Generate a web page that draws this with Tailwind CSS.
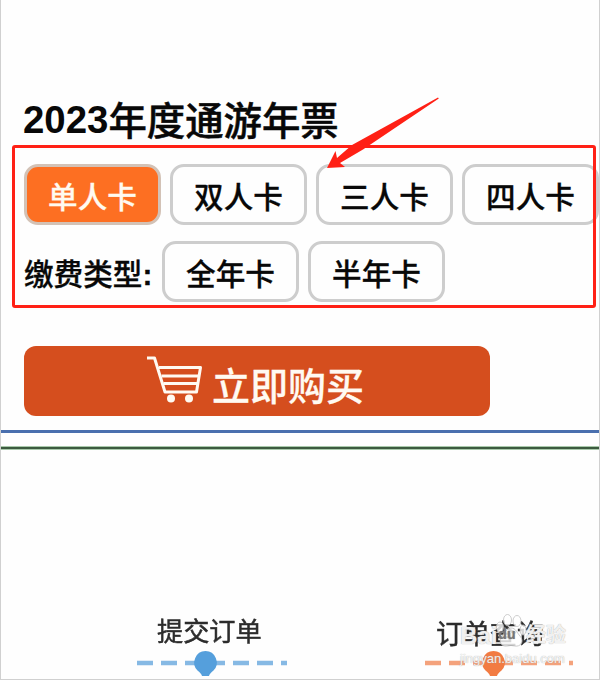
<!DOCTYPE html>
<html lang="zh-CN">
  <head>
    <meta charset="UTF-8" />
    <meta name="viewport" content="width=device-width, initial-scale=1.0" />
    <title>2023年度通游年票</title>
    <script src="https://cdn.jsdelivr.net/npm/@tailwindcss/browser@4"></script>
  </head>
  <body
    class="relative w-[600px] h-[680px] overflow-hidden bg-[#fefefe] border border-t-0 border-[#d0d0d0] font-['Liberation_Sans','Noto_Sans_CJK_SC',sans-serif] text-[#080808]"
  >
    <!-- edge of the neighbouring photo -->
    <div
      class="absolute -left-px top-[100px] w-px h-[300px] bg-linear-to-b from-[#d0d0d0] via-[#777] to-[#d0d0d0]"
    ></div>

    <main class="flex flex-col pt-[96px]">
      <h1
        class="flex items-center h-12 pl-[22px] text-[38.4px] leading-none whitespace-nowrap"
      >
        <span class="font-bold">2023</span>
        <span
          class="pb-[4px] font-medium font-['Noto_Sans_CJK_SC',sans-serif] [-webkit-text-stroke:0.5px]"
          >年度通游年票</span
        >
      </h1>

      <div
        class="flex gap-[9px] mt-5 pl-[23px] text-[29.6px] font-medium leading-none [-webkit-text-stroke:0.3px]"
      >
        <button
          class="shrink-0 w-[137px] h-[61px] pt-[6px] rounded-[14px] border-[3px] border-[#d3c2b6] bg-[#fd6f22] text-[#fffaf0]"
        >
          单人卡
        </button>
        <button
          class="shrink-0 w-[137px] h-[61px] pt-[6px] rounded-[14px] border-[3px] border-[#cdcdcd]"
        >
          双人卡
        </button>
        <button
          class="shrink-0 w-[137px] h-[61px] pt-[6px] rounded-[14px] border-[3px] border-[#cdcdcd]"
        >
          三人卡
        </button>
        <button
          class="shrink-0 w-[137px] h-[61px] pt-[6px] rounded-[14px] border-[3px] border-[#cdcdcd]"
        >
          四人卡
        </button>
      </div>

      <div
        class="flex items-center gap-[9px] mt-4 pl-[23px] text-[29.6px] font-medium leading-none [-webkit-text-stroke:0.3px]"
      >
        <span class="w-[129px] pt-[6px] whitespace-nowrap"
          >缴费类型<b>:</b></span
        >
        <button
          class="w-[137px] h-[61px] pt-[6px] rounded-[14px] border-[3px] border-[#cdcdcd]"
        >
          全年卡
        </button>
        <button
          class="w-[137px] h-[61px] pt-[6px] rounded-[14px] border-[3px] border-[#cdcdcd]"
        >
          半年卡
        </button>
      </div>

      <button
        class="flex items-start w-[466px] h-[70px] mt-11 ml-[23px] pl-[123px] rounded-[12px] bg-[#d54e1e] text-[#fffaf2]"
      >
        <svg
          class="w-[58px] h-[50px] mt-[9px]"
          viewBox="0 0 58 50"
          fill="none"
          stroke="currentColor"
          stroke-width="3"
          stroke-linejoin="round"
        >
          <path d="M0 3h7.500l10.500 34h31.500l4-24.500H12" />
          <path d="M14.500 21h37M16.500 28.500h34" />
          <circle cx="24" cy="43.500" r="4" fill="currentColor" stroke="none" />
          <circle cx="42" cy="43.500" r="4" fill="currentColor" stroke="none" />
        </svg>
        <span
          class="mt-[22px] ml-[7px] text-[38px] font-medium leading-none [-webkit-text-stroke:0.3px]"
          >立即购买</span
        >
      </button>

      <div class="-ml-px h-[3px] mt-[14px] bg-[#4a6fae]"></div>
      <div
        class="-ml-px h-1 mt-[13px] border-y border-[#a9c9ab] bg-[#3b5a3e]"
      ></div>

      <div class="flex mt-[168px] leading-none text-[#2c2c2c]">
        <section class="w-[150px] ml-[135px]">
          <h2
            class="pl-[21px] pt-px text-[26.200px] blur-[0.6px] [-webkit-text-stroke:0.5px]"
          >
            提交订单
          </h2>
          <svg
            class="block w-[152px] h-[27px] mt-[5px] blur-[0.7px]"
            viewBox="0 0 152 27"
          >
            <path
              d="M1 13h150"
              stroke="#86b9e4"
              stroke-width="4.500"
              stroke-dasharray="16 8"
            />
            <path
              d="M69.500 1a11.500 11.500 0 0 1 8 19.500q-4 3-4.500 5.500h-7q-.5-2.500-4.500-5.500a11.500 11.500 0 0 1 8-19.500z"
              fill="#559fdc"
            />
          </svg>
        </section>
        <section class="w-[150px] ml-[138px]">
          <h2
            class="pl-[12px] pt-[4px] text-[27px] blur-[0.6px] [-webkit-text-stroke:0.5px]"
          >
            订单查询
          </h2>
          <svg
            class="block w-[152px] h-[27px] mt-px blur-[0.7px]"
            viewBox="0 0 152 27"
          >
            <path
              d="M1 13h148"
              stroke="#f4a27c"
              stroke-width="4.500"
              stroke-dasharray="16 8"
            />
            <path
              d="M69.500 1a11.500 11.500 0 0 1 8 19.500q-4 3-4.500 5.500h-7q-.5-2.500-4.500-5.500a11.500 11.500 0 0 1 8-19.500z"
              fill="#f27b42"
            />
          </svg>
        </section>
      </div>
    </main>

    <!-- red marker frame and arrow -->
    <div
      class="absolute left-[11px] top-[145px] w-[584px] h-[163px] rounded-[3px] border-[3px] border-[#ff2015]"
    ></div>
    <svg
      class="absolute left-[323px] top-[94px] w-[120px] h-[80px]"
      viewBox="324 94 120 80"
      fill="#ff2015"
    >
      <path
        d="M327 168l8.500-17 1.500 7L352 145l86-47.500.8 1L363 149.500l-23 13.500 5 4z"
      />
    </svg>

    <!-- watermark -->
    <div
      class="absolute left-[459px] top-[614px] w-[106px] text-white/85 leading-none"
    >
      <svg
        class="absolute left-[35px] -top-px w-[32px] h-[34px]"
        viewBox="0 0 32 34"
        fill="#fff"
        fill-opacity=".8"
        stroke="#c0c0c0"
        stroke-width=".8"
      >
        <ellipse cx="5" cy="14" rx="3.500" ry="5" />
        <ellipse cx="12.500" cy="7" rx="4" ry="5.500" />
        <ellipse cx="22" cy="8" rx="4" ry="5.500" />
        <ellipse cx="28" cy="17" rx="3" ry="5" />
        <path
          d="M16 15c5 0 6 5 9 8 5 6 0 11-5 10q-4-1-8 0c-6 1-9-5-5-10 3-3 4-8 9-8z"
        />
      </svg>
      <div
        class="relative flex items-end h-[34px] text-[24px] font-bold [text-shadow:0_0_1px_#999]"
      >
        <span>Bai</span>
        <span class="pb-1 ml-px text-sm text-[#777]">du</span>
        <span class="ml-auto pb-[3px] text-[20px]">经验</span>
      </div>
      <div class="relative mt-1 text-[13px] [text-shadow:0_0_1px_#999]">
        jingyan.baidu.com
      </div>
    </div>
  </body>
</html>
